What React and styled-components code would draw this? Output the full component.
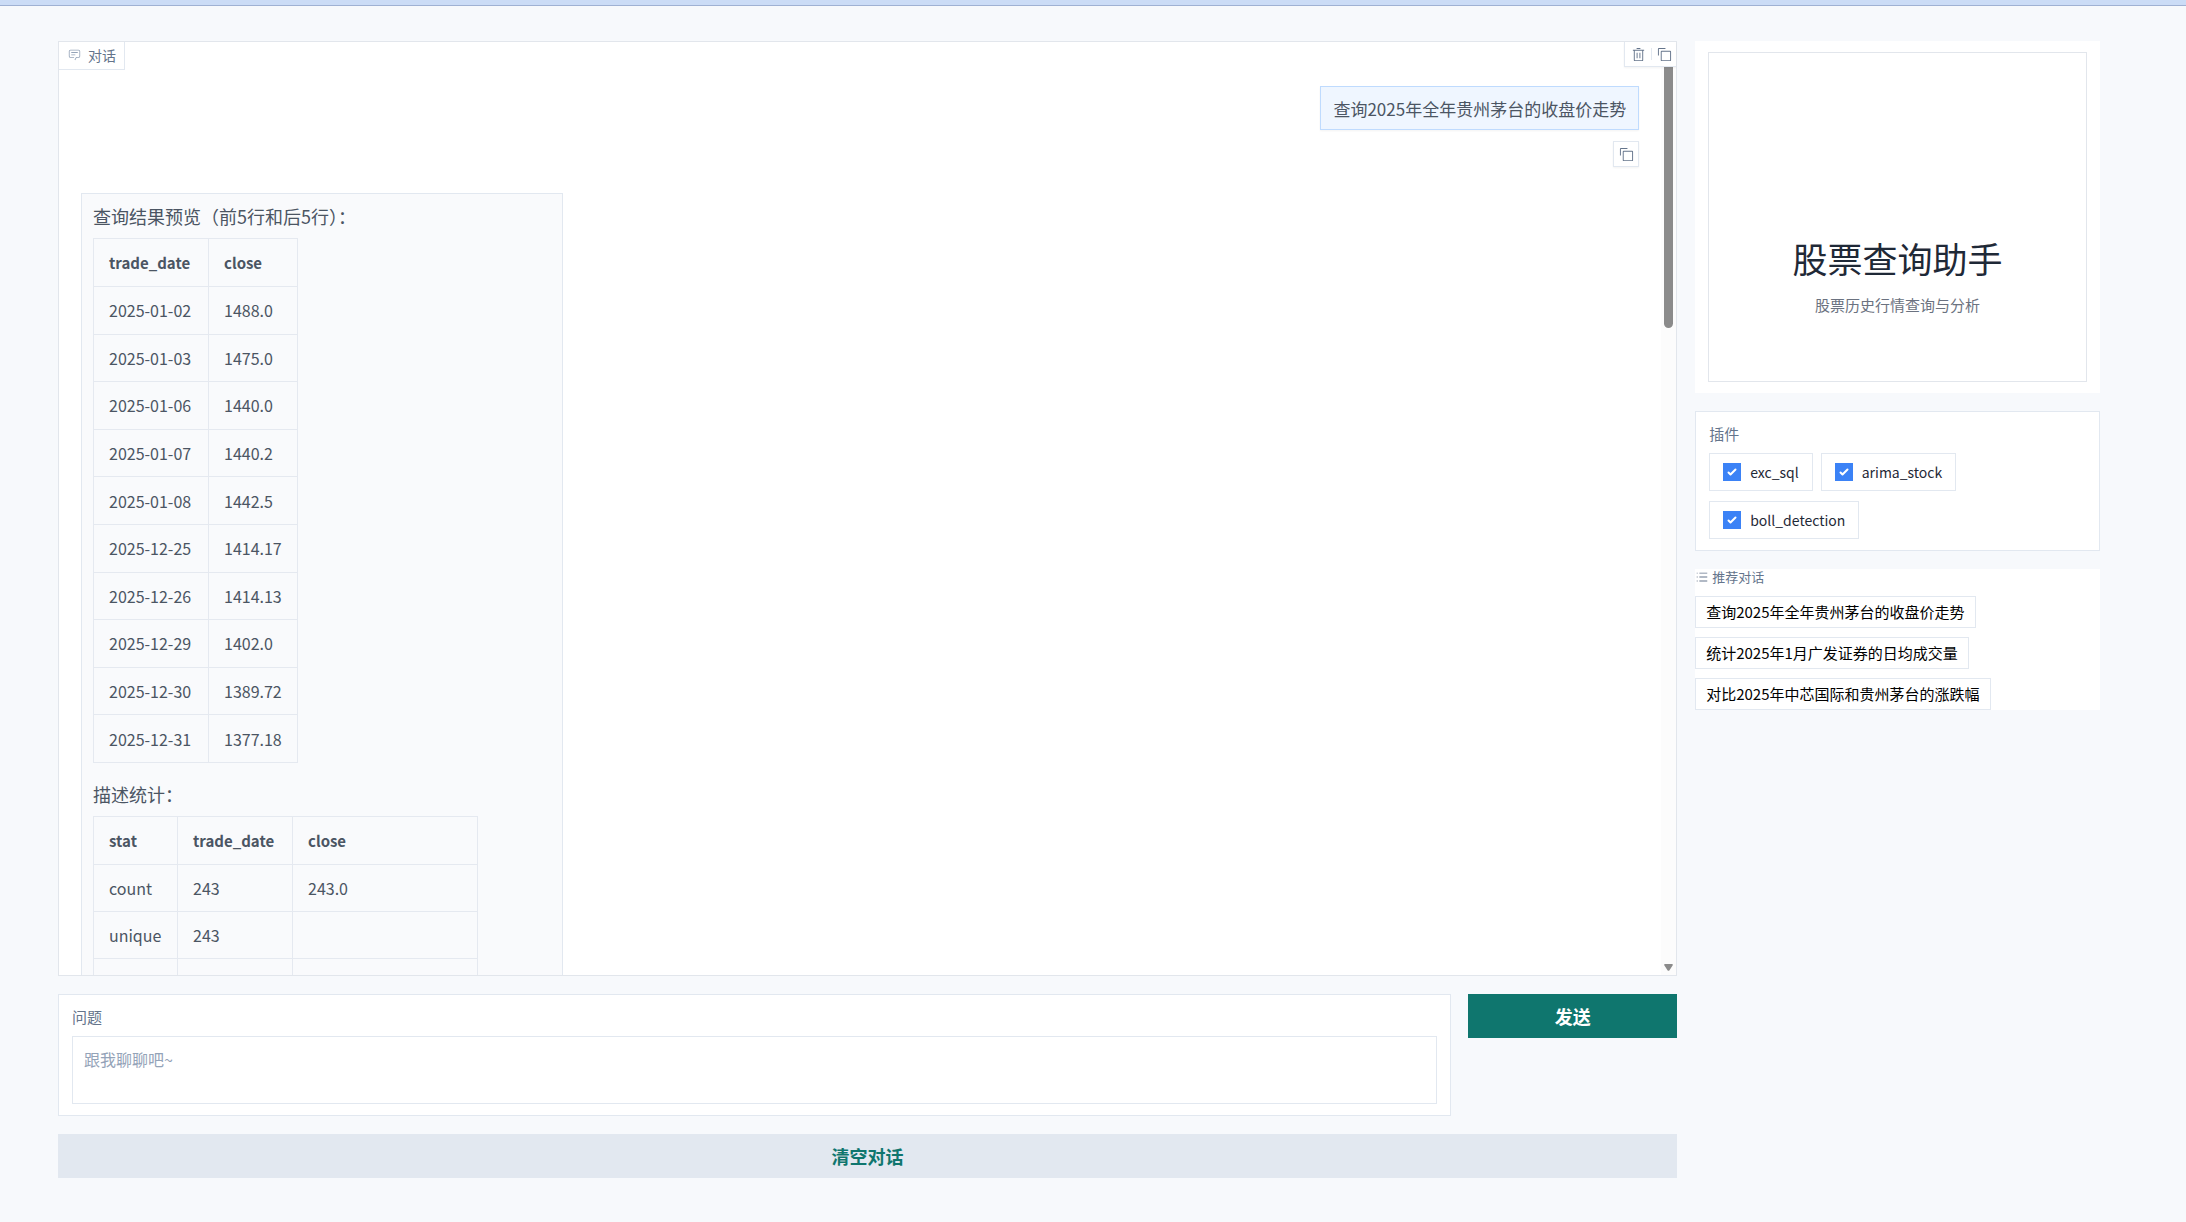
import React, { useState } from "react";
import styled, { createGlobalStyle, css } from "styled-components";

const previewRows = [
  ["2025-01-02", "1488.0"],
  ["2025-01-03", "1475.0"],
  ["2025-01-06", "1440.0"],
  ["2025-01-07", "1440.2"],
  ["2025-01-08", "1442.5"],
  ["2025-12-25", "1414.17"],
  ["2025-12-26", "1414.13"],
  ["2025-12-29", "1402.0"],
  ["2025-12-30", "1389.72"],
  ["2025-12-31", "1377.18"],
];

const statRows = [
  ["count", "243", "243.0"],
  ["unique", "243", ""],
  ["", "", ""],
];

const plugins = ["exc_sql", "arima_stock", "boll_detection"];

const suggestions = [
  "查询2025年全年贵州茅台的收盘价走势",
  "统计2025年1月广发证券的日均成交量",
  "对比2025年中芯国际和贵州茅台的涨跌幅",
];

const ChatIcon = () => (
  <svg width="13" height="13" viewBox="0 0 32 32" fill="currentColor" aria-hidden="true">
    <path d="M17.74 30L16 29l4-7h6a2 2 0 0 0 2-2V8a2 2 0 0 0-2-2H6a2 2 0 0 0-2 2v12a2 2 0 0 0 2 2h9v2H6a4 4 0 0 1-4-4V8a4 4 0 0 1 4-4h20a4 4 0 0 1 4 4v12a4 4 0 0 1-4 4h-4.84z" />
    <path d="M8 10h16v2H8zM8 16h10v2H8z" />
  </svg>
);

const TrashIcon = () => (
  <svg width="15" height="15" viewBox="0 0 32 32" fill="currentColor" aria-hidden="true">
    <path d="M12 12h2v12h-2zM18 12h2v12h-2z" />
    <path d="M4 6v2h2v20a2 2 0 0 0 2 2h16a2 2 0 0 0 2-2V8h2V6zm4 22V8h16v20zM12 2h8v2h-8z" />
  </svg>
);

const CopyIcon = () => (
  <svg width="15" height="15" viewBox="0 0 32 32" fill="currentColor" aria-hidden="true">
    <path d="M28 10v18H10V10h18m0-2H10a2 2 0 0 0-2 2v18a2 2 0 0 0 2 2h18a2 2 0 0 0 2-2V10a2 2 0 0 0-2-2z" />
    <path d="M4 18H2V4a2 2 0 0 1 2-2h14v2H4z" />
  </svg>
);

const ListIcon = () => (
  <svg width="14" height="14" viewBox="0 0 32 32" fill="currentColor" aria-hidden="true">
    <path d="M10 6h18v2H10zM10 24h18v2H10zM10 15h18v2H10zM4 15h2v2H4zM4 6h2v2H4zM4 24h2v2H4z" />
  </svg>
);

const App = () => {
  const [question, setQuestion] = useState("");
  const [enabled, setEnabled] = useState(plugins);

  const togglePlugin = (name) => {
    setEnabled(
      enabled.includes(name)
        ? enabled.filter((item) => item !== name)
        : [...enabled, name]
    );
  };

  return (
    <>
      <GlobalStyle />
      <Page>
        <TopBar />
        <Layout>
          <MainColumn>
            {/* Chat Area */}
            <ChatPanel>
              <ChatLabel>
                <ChatIcon />
                对话
              </ChatLabel>
              <PanelTools>
                <IconButton aria-label="清空">
                  <TrashIcon />
                </IconButton>
                <ToolDivider />
                <IconButton aria-label="复制全部">
                  <CopyIcon />
                </IconButton>
              </PanelTools>
              <Messages>
                <UserBubble>查询2025年全年贵州茅台的收盘价走势</UserBubble>
                <CopyButton aria-label="复制">
                  <CopyIcon />
                </CopyButton>
                <BotBubble>
                  <p>查询结果预览（前5行和后5行）：</p>
                  <DataTable $height={525}>
                    <thead>
                      <tr>
                        <Th $width={115}>trade_date</Th>
                        <Th $width={89}>close</Th>
                      </tr>
                    </thead>
                    <tbody>
                      {previewRows.map(([date, close]) => (
                        <tr key={date}>
                          <Td>{date}</Td>
                          <Td>{close}</Td>
                        </tr>
                      ))}
                    </tbody>
                  </DataTable>
                  <p>描述统计：</p>
                  <DataTable>
                    <thead>
                      <tr>
                        <Th $width={84}>stat</Th>
                        <Th $width={115}>trade_date</Th>
                        <Th $width={185}>close</Th>
                      </tr>
                    </thead>
                    <tbody>
                      {statRows.map(([stat, date, close]) => (
                        <tr key={stat}>
                          <Td>{stat}</Td>
                          <Td>{date}</Td>
                          <Td>{close}</Td>
                        </tr>
                      ))}
                    </tbody>
                  </DataTable>
                </BotBubble>
              </Messages>
              <ScrollTrack>
                <ScrollThumb />
                <svg width="9" height="7" viewBox="0 0 9 7" fill="#8b8b8b" aria-hidden="true">
                  <path d="M1 0h7c1 0 1 1 .6 1.5L5.500 6.200c-.5.8-1.500.8-2 0L.4 1.500C0 1 0 0 1 0z" />
                </svg>
              </ScrollTrack>
            </ChatPanel>

            {/* Input Area */}
            <InputRow>
              <QuestionBox>
                <FieldLabel htmlFor="question">问题</FieldLabel>
                <QuestionInput
                  id="question"
                  placeholder="跟我聊聊吧~"
                  value={question}
                  onChange={(e) => setQuestion(e.target.value)}
                />
              </QuestionBox>
              <BigButton $primary>发送</BigButton>
            </InputRow>
            <BigButton onClick={() => setQuestion("")}>清空对话</BigButton>
          </MainColumn>

          <SideColumn>
            <IntroCard>
              <Intro>
                <h1>股票查询助手</h1>
                <p>股票历史行情查询与分析</p>
              </Intro>
            </IntroCard>

            <PluginCard>
              <PluginTitle>插件</PluginTitle>
              <PluginList>
                {plugins.map((name) => (
                  <PluginOption key={name}>
                    <input
                      type="checkbox"
                      checked={enabled.includes(name)}
                      onChange={() => togglePlugin(name)}
                    />
                    {name}
                  </PluginOption>
                ))}
              </PluginList>
            </PluginCard>

            <Suggestions>
              <SuggestionTitle>
                <ListIcon />
                推荐对话
              </SuggestionTitle>
              {suggestions.map((item) => (
                <SuggestionButton key={item} onClick={() => setQuestion(item)}>
                  {item}
                </SuggestionButton>
              ))}
            </Suggestions>
          </SideColumn>
        </Layout>
      </Page>
    </>
  );
};

// Styled Components
const GlobalStyle = createGlobalStyle`
  * {
    box-sizing: border-box;
  }

  body {
    margin: 0;
    background-color: #f7f9fc;
    color: #1f2937;
    font-family: "Noto Sans CJK SC", "Noto Sans", sans-serif;
  }

  button,
  textarea {
    font-family: inherit;
    border-radius: 0;
  }

  button {
    cursor: pointer;
  }
`;

const Page = styled.div`
  height: 100vh;
  display: flex;
  flex-direction: column;
`;

const TopBar = styled.div`
  height: 6px;
  flex-shrink: 0;
  background-color: #cbdcf6;
  border-bottom: 1px solid #9fb1d3;
`;

const Layout = styled.main`
  flex: 1;
  min-height: 0;
  display: grid;
  grid-template-columns: minmax(0, 4fr) minmax(0, 1fr);
  grid-template-rows: minmax(0, 1fr);
  gap: 18px;
  padding: 35px 86px 44px 58px;
`;

const MainColumn = styled.div`
  display: flex;
  flex-direction: column;
  gap: 18px;
`;

const SideColumn = styled.aside`
  display: flex;
  flex-direction: column;
  gap: 18px;
`;

const ChatPanel = styled.section`
  position: relative;
  flex: 1;
  min-height: 0;
  display: flex;
  background-color: #ffffff;
  border: 1px solid #e2e6ec;
`;

const ChatLabel = styled.div`
  position: absolute;
  top: 0;
  left: 0;
  display: flex;
  align-items: center;
  gap: 7px;
  height: 28px;
  padding: 0 8px 2px 9px;
  background-color: #ffffff;
  border: solid #e2e8f0;
  border-width: 0 1px 1px 0;
  color: #64748b;
  font-size: 14px;

  svg {
    color: #94a3b8;
  }
`;

const PanelTools = styled.div`
  position: absolute;
  top: 0;
  right: 0;
  z-index: 1;
  display: flex;
  align-items: center;
  gap: 5px;
  height: 25px;
  padding: 0 4px 0 6px;
  background-color: #ffffff;
  border: solid #e2e8f0;
  border-width: 0 0 1px 1px;
  box-shadow: 0 1px 2px rgba(0, 0, 0, 0.05);
`;

const ToolDivider = styled.span`
  width: 1px;
  height: 12px;
  background-color: #e2e8f0;
`;

const IconButton = styled.button`
  display: flex;
  align-items: center;
  justify-content: center;
  padding: 0;
  background: none;
  border: none;
  color: #64748b;
`;

const Messages = styled.div`
  flex: 1;
  overflow: hidden;
  display: flex;
  flex-direction: column;
  padding: 44px 22px 0;
`;

const UserBubble = styled.div`
  align-self: flex-end;
  flex-shrink: 0;
  padding: 9px 12px 7px;
  background-color: #eff6ff;
  border: 1px solid #bfdbfe;
  box-shadow: 0 1px 2px rgba(0, 0, 0, 0.05);
  color: #4b5563;
  font-size: 17px;
  line-height: 26px;
`;

const CopyButton = styled(IconButton)`
  align-self: flex-end;
  flex-shrink: 0;
  width: 26px;
  height: 26px;
  margin: 11px 0 26px;
  background-color: #ffffff;
  border: 1px solid #e2e8f0;
  box-shadow: 0 1px 2px rgba(0, 0, 0, 0.05);
`;

const BotBubble = styled.div`
  align-self: flex-start;
  flex-shrink: 0;
  width: 482px;
  padding: 9px 11px;
  background-color: #f9fafc;
  border: 1px solid #e2e8f0;
  color: #4b5563;

  p {
    margin: 0 0 9px;
    font-size: 18px;
    line-height: 26px;
  }
`;

const DataTable = styled.table`
  height: ${(props) => (props.$height ? `${props.$height}px` : "auto")};
  margin-bottom: 18px;
  border-collapse: collapse;
  font-size: 16px;
  line-height: 22px;
`;

const cell = css`
  height: 48px;
  padding: 0 15px;
  border: 1px solid #e5e9f0;
  text-align: left;
  white-space: nowrap;
`;

const Th = styled.th`
  ${cell}
  width: ${(props) => props.$width}px;
  font-size: 15px;
  font-weight: 600;
`;

const Td = styled.td`
  ${cell}
  height: 47px;
`;

const ScrollTrack = styled.div`
  display: flex;
  flex-direction: column;
  align-items: center;
  justify-content: space-between;
  width: 15px;
  padding: 14px 3px 4px;
  background-color: #fcfcfc;
`;

const ScrollThumb = styled.div`
  width: 9px;
  height: 272px;
  background-color: #8b8b8b;
  border-radius: 5px;
`;

const InputRow = styled.div`
  display: grid;
  grid-template-columns: 20fr 3fr;
  align-items: start;
  gap: 17px;
`;

const QuestionBox = styled.div`
  display: flex;
  flex-direction: column;
  gap: 9px;
  padding: 11px 13px;
  background-color: #ffffff;
  border: 1px solid #e2e8f0;
`;

const FieldLabel = styled.label`
  color: #64748b;
  font-size: 15px;
  line-height: 21px;
`;

const QuestionInput = styled.textarea`
  height: 68px;
  padding: 11px;
  background-color: #ffffff;
  border: 1px solid #e2e8f0;
  outline: none;
  resize: none;
  color: #1f2937;
  font-size: 16px;
  line-height: 22px;

  &::placeholder {
    color: #94a3b8;
  }
`;

const BigButton = styled.button`
  height: 44px;
  flex-shrink: 0;
  padding: 0;
  border: none;
  background-color: ${(props) => (props.$primary ? "#0f766e" : "#e2e8f0")};
  color: ${(props) => (props.$primary ? "#ffffff" : "#0f766e")};
  font-size: 18px;
  font-weight: 700;
  line-height: 26px;
`;

const IntroCard = styled.section`
  padding: 11px 13px;
  background-color: #ffffff;
`;

const Intro = styled.div`
  padding: 182px 0 65px;
  border: 1px solid #e2e6ec;
  text-align: center;

  h1 {
    margin: 0 0 13px;
    color: #1f2937;
    font-size: 35px;
    font-weight: 400;
    line-height: 46px;
  }

  p {
    margin: 0;
    color: #6b7280;
    font-size: 15px;
    line-height: 22px;
  }
`;

const PluginCard = styled.fieldset`
  margin: 0;
  padding: 11px 13px;
  background-color: #ffffff;
  border: 1px solid #e2e8f0;
`;

const PluginTitle = styled.div`
  margin-bottom: 9px;
  color: #64748b;
  font-size: 15px;
  line-height: 21px;
`;

const PluginList = styled.div`
  display: flex;
  flex-wrap: wrap;
  gap: 10px 8px;
`;

const PluginOption = styled.label`
  display: flex;
  align-items: center;
  gap: 9px;
  height: 38px;
  padding: 0 13px;
  border: 1px solid #e2e8f0;
  color: #1f2937;
  font-size: 14px;
  cursor: pointer;

  input {
    appearance: none;
    width: 18px;
    height: 18px;
    margin: 0;
    border: 1px solid #d1d5db;
  }

  input:checked {
    border-color: #3b82f6;
    background: #3b82f6
      url("data:image/svg+xml,%3Csvg viewBox='0 0 16 16' fill='white' xmlns='http://www.w3.org/2000/svg'%3E%3Cpath d='M12.207 4.793a1 1 0 010 1.414l-5 5a1 1 0 01-1.414 0l-2-2a1 1 0 011.414-1.414L6.5 9.086l4.293-4.293a1 1 0 011.414 0z'/%3E%3C/svg%3E")
      center / 100% no-repeat;
  }
`;

const Suggestions = styled.section`
  display: flex;
  flex-direction: column;
  align-items: flex-start;
  gap: 9px;
  background-color: #ffffff;
`;

const SuggestionTitle = styled.div`
  display: flex;
  align-items: center;
  gap: 3px;
  padding-bottom: 2px;
  color: #64748b;
  font-size: 13px;
  line-height: 16px;
`;

const SuggestionButton = styled.button`
  height: 32px;
  padding: 0 10px;
  background-color: #ffffff;
  border: 1px solid #e2e8f0;
  color: #000000;
  font-size: 15px;
  line-height: 22px;
`;

export default App;
